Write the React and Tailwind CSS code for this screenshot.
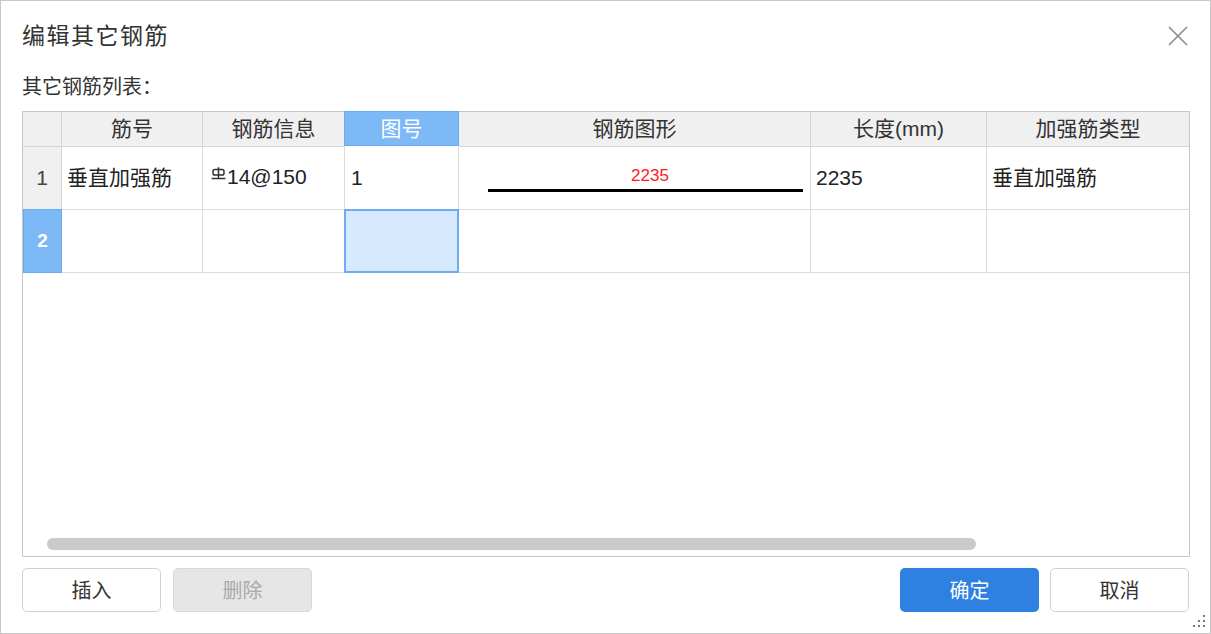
import React from "react";

// 表格列宽(含右侧分隔线)
const COLS = "grid-cols-[39px_141px_142px_114px_352px_176px_202px]";

const HEADERS = ["筋号", "钢筋信息", "图号", "钢筋图形", "长度(mm)", "加强筋类型"];

function SteelMark() {
  // 三级钢符号
  return (
    <svg width="15" height="13" viewBox="0 0 15 13" className="mb-[7px] mr-[1px]">
      <rect x="2" y="2.4" width="11" height="5.6" rx="1.8" fill="none" stroke="#333" strokeWidth="1.5" />
      <path d="M7.5 0.2V11.5M0.6 11.5H14.4" stroke="#333" strokeWidth="1.5" fill="none" />
    </svg>
  );
}

function HeaderCell({ children, active, last }) {
  if (active) {
    return (
      <div className="flex items-center justify-center bg-[#7cb9f6] border border-[#68a9ef] text-white -ml-px -mt-px h-[35px]">
        {children}
      </div>
    );
  }
  return (
    <div
      className={`flex items-center justify-center bg-[#f0f0f0] text-[#333] border-b border-[#d6d6d6] ${
        last ? "" : "border-r"
      }`}
    >
      {children}
    </div>
  );
}

function Cell({ children, className = "", last }) {
  return (
    <div
      className={`flex items-center pl-[5px] border-b border-[#dcdcdc] ${last ? "" : "border-r"} ${className}`}
    >
      {children}
    </div>
  );
}

export default function App() {
  return (
    <div
      className="w-[1211px] h-[634px] bg-white border border-[#c8c8c8] flex flex-col relative text-[#222]"
      style={{ fontFamily: '"Liberation Sans", "Noto Sans CJK SC", sans-serif' }}
    >
      {/* 标题栏 */}
      <div className="h-[70px] flex items-center justify-between pl-[21px] pr-[22px]">
        <span className="text-[23px] tracking-[1.5px] text-[#333]">编辑其它钢筋</span>
        <svg width="20" height="20" viewBox="0 0 20 20">
          <path d="M1 1L19 19M19 1L1 19" stroke="#8a8a8a" strokeWidth="1.6" fill="none" />
        </svg>
      </div>

      <div className="h-[28px] leading-[28px] mt-[2px] pl-[21px] text-[20px] text-[#333]">其它钢筋列表：</div>

      {/* 表格 */}
      <div className="mt-[10px] ml-[21px] w-[1168px] h-[446px] border border-[#c6c6c6] relative text-[21px]">
        <div className={`grid ${COLS} grid-rows-[35px_63px_63px]`}>
          <div className="bg-[#f0f0f0] border-r border-b border-[#d6d6d6]" />
          {HEADERS.map((h, i) => (
            <HeaderCell key={h} active={i === 2} last={i === HEADERS.length - 1}>
              {h}
            </HeaderCell>
          ))}

          {/* 第一行 */}
          <div className="flex items-center justify-center bg-[#f0f0f0] text-[#444] border-r border-b border-[#d6d6d6]">
            1
          </div>
          <Cell>垂直加强筋</Cell>
          <Cell className="pl-[8px] pb-[3px]">
            <SteelMark />
            <span>14@150</span>
          </Cell>
          <Cell className="pl-[6px]">1</Cell>
          <div className="flex flex-col pt-[20px] pl-[29px] pr-[7px] border-r border-b border-[#dcdcdc]">
            <div className="text-[17px] leading-[18px] text-[#ff1a1a] text-center pl-[9px]">2235</div>
            <div className="mt-[4px] h-[3px] bg-black" />
          </div>
          <Cell>2235</Cell>
          <Cell last>垂直加强筋</Cell>

          {/* 第二行 */}
          <div className="flex items-center justify-center bg-[#7cb9f6] border border-[#68a9ef] -mt-px text-white font-bold text-[19px]">
            2
          </div>
          <Cell />
          <Cell />
          <div className="bg-[#d6e9fd] border-[2px] border-[#6eabef] -ml-px -mt-px" />
          <Cell />
          <Cell />
          <Cell last />
        </div>

        {/* 横向滚动条 */}
        <div className="absolute left-[24px] bottom-[6px] w-[929px] h-[12px] rounded-full bg-[#cbcbcb]" />
      </div>

      {/* 按钮 */}
      <div className="mt-[11px] px-[21px] flex items-center justify-between text-[20px]">
        <div className="flex gap-[12px]">
          <button className="w-[139px] h-[44px] pt-[2px] rounded-[5px] border border-[#d2d2d2] bg-white text-[#333]">
            插入
          </button>
          <button className="w-[139px] h-[44px] pt-[2px] rounded-[5px] border border-[#d8d8d8] bg-[#e6e6e6] text-[#a9a9a9]">
            删除
          </button>
        </div>
        <div className="flex gap-[11px]">
          <button className="w-[139px] h-[44px] pt-[2px] rounded-[5px] bg-[#2e80e1] text-white">确定</button>
          <button className="w-[139px] h-[44px] pt-[2px] rounded-[5px] border border-[#d2d2d2] bg-white text-[#333]">
            取消
          </button>
        </div>
      </div>

      {/* 右下角拖动点 */}
      <svg width="14" height="14" viewBox="0 0 14 14" className="absolute right-[4px] bottom-[5px]">
        <rect x="11" y="1" width="2" height="2" fill="#777" />
        <rect x="6" y="6" width="2" height="2" fill="#777" />
        <rect x="11" y="6" width="2" height="2" fill="#777" />
        <rect x="1" y="11" width="2" height="2" fill="#777" />
        <rect x="6" y="11" width="2" height="2" fill="#777" />
        <rect x="11" y="11" width="2" height="2" fill="#777" />
      </svg>
    </div>
  );
}
